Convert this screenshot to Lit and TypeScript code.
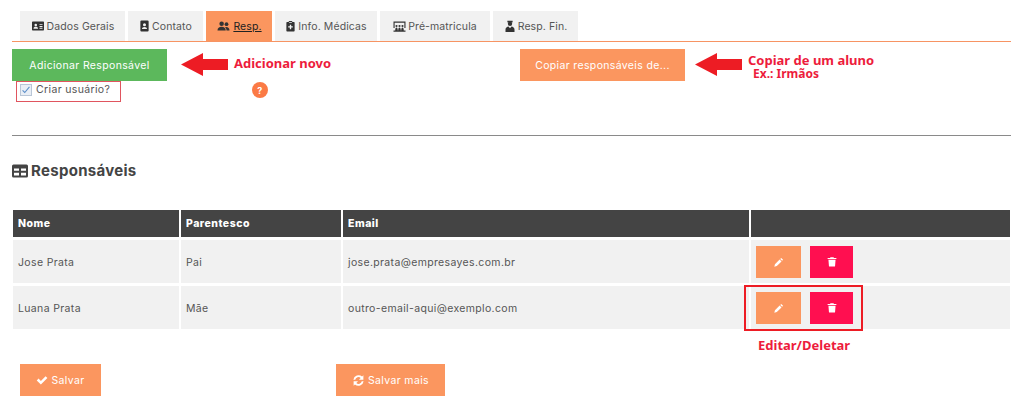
import { LitElement, html, css, svg } from "lit";
import { customElement } from "lit/decorators.js";

const ico = (body: unknown, w = 12, h = 12, vb = "0 0 16 16") =>
  html`<svg class="ico" width=${w} height=${h} viewBox=${vb} fill="currentColor">${body}</svg>`;

const idCard = svg`<path fill-rule="evenodd" d="M1 2h14a1 1 0 0 1 1 1v10a1 1 0 0 1-1 1H1a1 1 0 0 1-1-1V3a1 1 0 0 1 1-1zm4 3a1.7 1.7 0 1 0 0 3.4A1.7 1.7 0 0 0 5 5zM2 11.500h6c0-1.600-1.200-2.400-3-2.400s-3 .8-3 2.400zM10 5.500v1.200h4V5.500zM10 8v1.200h4V8zM10 10.300v1.200h4v-1.200z"/>`;
const book = svg`<path fill-rule="evenodd" d="M3.500 0h9A1.500 1.500 0 0 1 14 1.500v13a1.500 1.500 0 0 1-1.500 1.500h-9A1.500 1.500 0 0 1 2 14.500v-13A1.500 1.500 0 0 1 3.500 0zM8 4a2.200 2.200 0 1 0 0 4.400A2.200 2.200 0 0 0 8 4zM4.300 12.500h7.400c0-2-1.600-3.200-3.700-3.200s-3.700 1.200-3.700 3.200z"/>`;
const users = svg`<circle cx="5.500" cy="5" r="3"/><path d="M0 14c0-3.500 2.300-5 5.500-5s5.500 1.500 5.500 5z"/><circle cx="12" cy="5.500" r="2.500"/><path d="M12 14h4c0-3-1.500-4.600-4.400-4.600-.6 0-1 .1-1.500.2 1.300 1 1.900 2.500 1.900 4.400z"/>`;
const clip = svg`<path fill-rule="evenodd" d="M5.500 2V.8h5V2H13a1 1 0 0 1 1 1v12a1 1 0 0 1-1 1H3a1 1 0 0 1-1-1V3a1 1 0 0 1 1-1zM7 6v2.300H4.700v2H7v2.300h2v-2.300h2.300v-2H9V6zM6 2.500v1h4v-1z"/>`;
const school = svg`<path fill-rule="evenodd" d="M0 2h16v8.500h-1.500V3.500h-13v7H0z"/><circle cx="4" cy="8" r="1.400"/><circle cx="8" cy="8" r="1.400"/><circle cx="12" cy="8" r="1.400"/><path d="M2.300 14c0-2.400.7-4 1.700-4s1.700 1.600 1.700 4zM6.300 14c0-2.400.7-4 1.700-4s1.700 1.600 1.700 4zM10.300 14c0-2.400.7-4 1.700-4s1.700 1.600 1.700 4zM0 14h16v1.500H0z"/>`;
const suit = svg`<path d="M4.500 1h7v2.200h-7z"/><circle cx="8" cy="5" r="2.900"/><path d="M2 16v-3.500C2 10 4 8.800 6 8.500L8 11l2-2.500c2 .3 4 1.500 4 4V16z"/>`;
const table = svg`<path fill-rule="evenodd" d="M1.500 1.500h13A1.500 1.500 0 0 1 16 3v10a1.500 1.500 0 0 1-1.500 1.500h-13A1.500 1.500 0 0 1 0 13V3a1.500 1.500 0 0 1 1.500-1.500zM2 5.500v2.300h5V5.500zm7 0v2.300h5V5.500zM2 9.800v2.700h5V9.800zm7 0v2.700h5V9.800z"/>`;
const pencil = svg`<path d="M11.500 1.500l3 3-1.500 1.500-3-3zM9 4l3 3-7.500 7.500-4 1 1-4z"/>`;
const trash = svg`<path d="M5.500 1h5l.6 1.300H15V4H1V2.300h3.900zM2.300 5h11.400l-.8 10a1 1 0 0 1-1 1H4.100a1 1 0 0 1-1-1z"/>`;
const check = svg`<path d="M1 8.500l2.400-2.400 3.100 3.100L12.800 3l2.400 2.400-8.700 8.600z"/>`;
const thinCheck = svg`<path d="M2.500 8.500l3.500 3.500 7.500-9" fill="none" stroke="currentColor" stroke-width="1.700"/>`;
const sync = svg`<path d="M14 1.500V7H8.500l2.200-2.100A4 4 0 0 0 4 7H1.700a6.400 6.400 0 0 1 10.700-3.800zM2 14.500V9h5.500l-2.200 2.100A4 4 0 0 0 12 9h2.300a6.400 6.400 0 0 1-10.700 3.800z"/>`;

const tabs = [
  { label: "Dados Gerais", icon: idCard, w: 14 },
  { label: "Contato", icon: book, w: 11 },
  { label: "Resp.", icon: users, w: 15, active: true },
  { label: "Info. Médicas", icon: clip, w: 11 },
  { label: "Pré-matricula", icon: school, w: 13 },
  { label: "Resp. Fin.", icon: suit, w: 12 },
];

const rows = [
  ["Jose Prata", "Pai", "jose.prata@empresayes.com.br"],
  ["Luana Prata", "Mãe", "outro-email-aqui@exemplo.com"],
];

const arrow = html`<svg class="arrow" width="47" height="23" viewBox="0 0 47 23"><path d="M0 11.500L22 0v6h25v11H22v6z" fill="#ed1c24"/></svg>`;

@customElement("app-root")
export class AppRoot extends LitElement {
  static styles = css`
    :host { display: block; width: 1024px; height: 414px; overflow: hidden; background: #fff;
      font-family: Inter, "Noto Sans", sans-serif; color: #555; font-size: 10.500px; letter-spacing: .35px; box-sizing: border-box; padding: 11px 13px 0 12px; }
    .ico { display: block; flex: none; }
    .tabs { display: grid; grid-template-columns: 105px 75px 66px 102px 110px 85px; column-gap: 3px; padding-left: 8px;
      height: 30px; border-bottom: 1px solid #f79463; box-sizing: content-box; }
    .tab { background: #f1f1f1; color: #555; display: flex; align-items: center; justify-content: center; gap: 2px; letter-spacing: .1px; }
    .tab svg { color: #333; }
    .tab.active { background: #fb965f; color: #222; }
    .tab.active span { text-decoration: underline; }
    .actions { display: flex; align-items: center; height: 32px; margin-top: 7px; }
    .btn { height: 32px; display: flex; align-items: center; justify-content: center; gap: 3px; color: #fff; background: #fb965f; box-sizing: border-box; }
    .add { width: 155px; background: #5cb85c; }
    .copy { width: 165px; }
    .arrow { display: block; flex: none; }
    .a1 { margin-left: 14px; margin-top: -2px; }
    .a2 { margin-left: 10px; margin-top: -2px; }
    .note { font-family: "Noto Sans", sans-serif; font-weight: 700; color: #ed1c3c; font-size: 13px; letter-spacing: 0; line-height: 14px; white-space: nowrap; }
    .n1 { margin-left: 6px; margin-right: 187px; width: 99px; margin-top: -5px; }
    .n2 { margin-left: 6px; margin-top: 3px; }
    .n2 small { display: block; font-size: 12px; line-height: 13px; padding-left: 5px; }
    .opts { display: flex; align-items: center; height: 21px; padding-left: 4px; }
    .criar { width: 105px; height: 21px; border: 1px solid #e0555f; box-sizing: border-box; display: flex; align-items: center; gap: 4px; padding-left: 3px; padding-bottom: 4px; }
    .box { width: 12px; height: 12px; border: 1px solid #b9c6d6; background: #e9eef5; box-sizing: border-box; color: #5b8ec9; flex: none; }
    .help { margin-left: 131px; width: 16px; height: 16px; border-radius: 50%; background: #fb7a45; color: #fff; font-weight: 700; font-size: 9px;
      display: flex; align-items: center; justify-content: center; flex: none; margin-top: -3px; }
    hr { border: 0; height: 1px; background: #8a8a8a; margin: 33px 0 0; }
    h2 { margin: 25px 0 0; display: flex; align-items: center; gap: 3px; font-size: 15px; line-height: 20px; font-weight: 700; color: #444; letter-spacing: .3px; }
    table { margin: 26px 0 0 -1px; width: 1001px; border-collapse: separate; border-spacing: 2px 3px; table-layout: fixed; }
    col.c1 { width: 166px; } col.c2 { width: 160px; } col.c3 { width: 406px; }
    th { background: #444; color: #fff; height: 27px; padding: 0 5px; text-align: left; font-size: 10.500px; font-weight: 800; letter-spacing: .5px; box-sizing: border-box; }
    td { background: #f1f1f1; height: 43px; padding: 1px 5px 0; box-sizing: border-box; color: #555; }
    td.acts { position: relative; padding-top: 0; }
    .acts div.wrap { display: flex; gap: 9px; }
    .sq { height: 32px; }
    .edit { width: 45px; }
    .del { width: 43px; background: #ff0f50; }
    .mark { position: absolute; left: -7px; top: -1px; width: 119px; height: 46px; border: 2px solid #ed1c24; box-sizing: border-box; pointer-events: none; }
    .caption { font-family: "Noto Sans", sans-serif; font-weight: 700; color: #ed1c3c; font-size: 13px; letter-spacing: 0; line-height: 14px; padding-left: 746px; margin-top: 6px; }
    .foot { display: flex; margin-top: 12px; padding-left: 8px; }
    .save { width: 81px; }
    .more { width: 109px; margin-left: 235px; }
  `;

  render() {
    return html`
      <nav class="tabs">
        ${tabs.map(
          (t) => html`<div class="tab ${t.active ? "active" : ""}">${ico(t.icon, t.w, 12)}<span>${t.label}</span></div>`
        )}
      </nav>
      <div class="actions">
        <div class="btn add">Adicionar Responsável</div>
        <div class="a1">${arrow}</div>
        <div class="note n1">Adicionar novo</div>
        <div class="btn copy">Copiar responsáveis de...</div>
        <div class="a2">${arrow}</div>
        <div class="note n2">Copiar de um aluno<small>Ex.: Irmãos</small></div>
      </div>
      <div class="opts">
        <label class="criar"><span class="box">${ico(thinCheck, 10, 10)}</span>Criar usuário?</label>
        <span class="help">?</span>
      </div>
      <hr />
      <h2>${ico(table, 16, 16)}Responsáveis</h2>
      <table>
        <colgroup><col class="c1" /><col class="c2" /><col class="c3" /><col /></colgroup>
        <thead><tr><th>Nome</th><th>Parentesco</th><th>Email</th><th></th></tr></thead>
        <tbody>
          ${rows.map(
            (r, i) => html`<tr>
              <td>${r[0]}</td><td>${r[1]}</td><td>${r[2]}</td>
              <td class="acts">
                <div class="wrap">
                  <div class="btn sq edit">${ico(pencil, 10, 10)}</div>
                  <div class="btn sq del">${ico(trash, 10, 11)}</div>
                </div>
                ${i === 1 ? html`<span class="mark"></span>` : ""}
              </td>
            </tr>`
          )}
        </tbody>
      </table>
      <div class="caption">Editar/Deletar</div>
      <div class="foot">
        <div class="btn save">${ico(check, 12, 12)}Salvar</div>
        <div class="btn more">${ico(sync, 13, 13)}Salvar mais</div>
      </div>
    `;
  }
}
